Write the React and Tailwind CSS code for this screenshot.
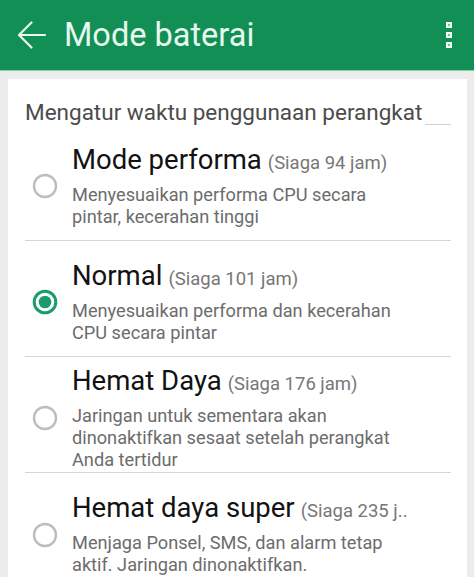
import React from "react";

const modes = [
  {
    title: "Mode performa",
    standby: "(Siaga 94 jam)",
    desc: ["Menyesuaikan performa CPU secara", "pintar, kecerahan tinggi"],
    selected: false,
  },
  {
    title: "Normal",
    standby: "(Siaga 101 jam)",
    desc: ["Menyesuaikan performa dan kecerahan", "CPU secara pintar"],
    selected: true,
  },
  {
    title: "Hemat Daya",
    standby: "(Siaga 176 jam)",
    desc: [
      "Jaringan untuk sementara akan",
      "dinonaktifkan sesaat setelah perangkat",
      "Anda tertidur",
    ],
    selected: false,
  },
  {
    title: "Hemat daya super",
    standby: "(Siaga 235 j..",
    desc: ["Menjaga Ponsel, SMS, dan alarm tetap", "aktif. Jaringan dinonaktifkan."],
    selected: false,
  },
];

function Radio({ checked }) {
  return (
    <svg width="26" height="26" viewBox="0 0 26 26" className="shrink-0">
      {checked ? (
        <>
          <circle cx="13" cy="13" r="10.8" fill="none" stroke="#1a9d6a" strokeWidth="3" />
          <circle cx="13" cy="13" r="6.3" fill="#1a9d6a" />
        </>
      ) : (
        <circle cx="13" cy="13" r="11" fill="none" stroke="#bdbdbd" strokeWidth="2.4" />
      )}
    </svg>
  );
}

function ModeRow({ mode, last }) {
  return (
    <div
      className={`flex h-[116px] items-center pt-[6px] ${
        last ? "" : "border-b border-[#d5d5d5]"
      }`}
    >
      <div className="ml-[7px] mt-[1px] flex w-[40px] shrink-0">
        <Radio checked={mode.selected} />
      </div>
      <div className="min-w-0 flex-1">
        <div className="whitespace-nowrap leading-[32px]">
          <span className="text-[27.5px] text-[#121212]">{mode.title}</span>
          <span className="ml-[6px] text-[18.5px] text-[#777777]">{mode.standby}</span>
        </div>
        <div className="mt-[4px] text-[18.2px] leading-[22px] text-[#6c6c6c]">
          {mode.desc.map((line) => (
            <div key={line} className="whitespace-nowrap">
              {line}
            </div>
          ))}
        </div>
      </div>
    </div>
  );
}

export default function App() {
  return (
    <div className="h-[577px] w-[474px] overflow-hidden bg-[#ececec] font-['Roboto',sans-serif]">
      {/* App bar */}
      <div className="flex h-[70px] items-center bg-[#118f55]">
        <svg width="30" height="30" viewBox="0 0 30 30" className="ml-[16px]">
          <path
            d="M3 15 H29 M15.5 2.5 L3 15 L15.5 27.5"
            fill="none"
            stroke="#eaf7f0"
            strokeWidth="2.2"
            strokeLinecap="round"
            strokeLinejoin="round"
          />
        </svg>
        <div className="ml-[18px] text-[32.5px] text-[#e8f7ef]">Mode baterai</div>
        <div className="ml-auto mr-[22px] flex flex-col gap-[4px]">
          {[0, 1, 2].map((i) => (
            <div key={i} className="flex h-[6px] w-[6px] items-center justify-center bg-[#f2fbf6]">
              <div className="h-[2px] w-[2px] bg-[#6cc39a]" />
            </div>
          ))}
        </div>
      </div>
      <div className="h-[1px] bg-[#7dd3a8]" />
      <div className="h-[3px] bg-[#f1e9ea]" />

      {/* Settings card */}
      <div className="ml-[8px] mt-[5px] w-[459px] bg-white pl-[17px] pr-[16px]">
        <div className="h-[45px] whitespace-nowrap pt-[21px] text-[22.5px] leading-[24px] text-[#4b4b4b]">
          Mengatur waktu penggunaan perangkat
        </div>
        <div className="flex justify-end">
          <div className="h-[1px] w-[26px] bg-[#cfcfcf]" />
        </div>
        {modes.map((m, i) => (
          <ModeRow key={m.title} mode={m} last={i === modes.length - 1} />
        ))}
      </div>
    </div>
  );
}
